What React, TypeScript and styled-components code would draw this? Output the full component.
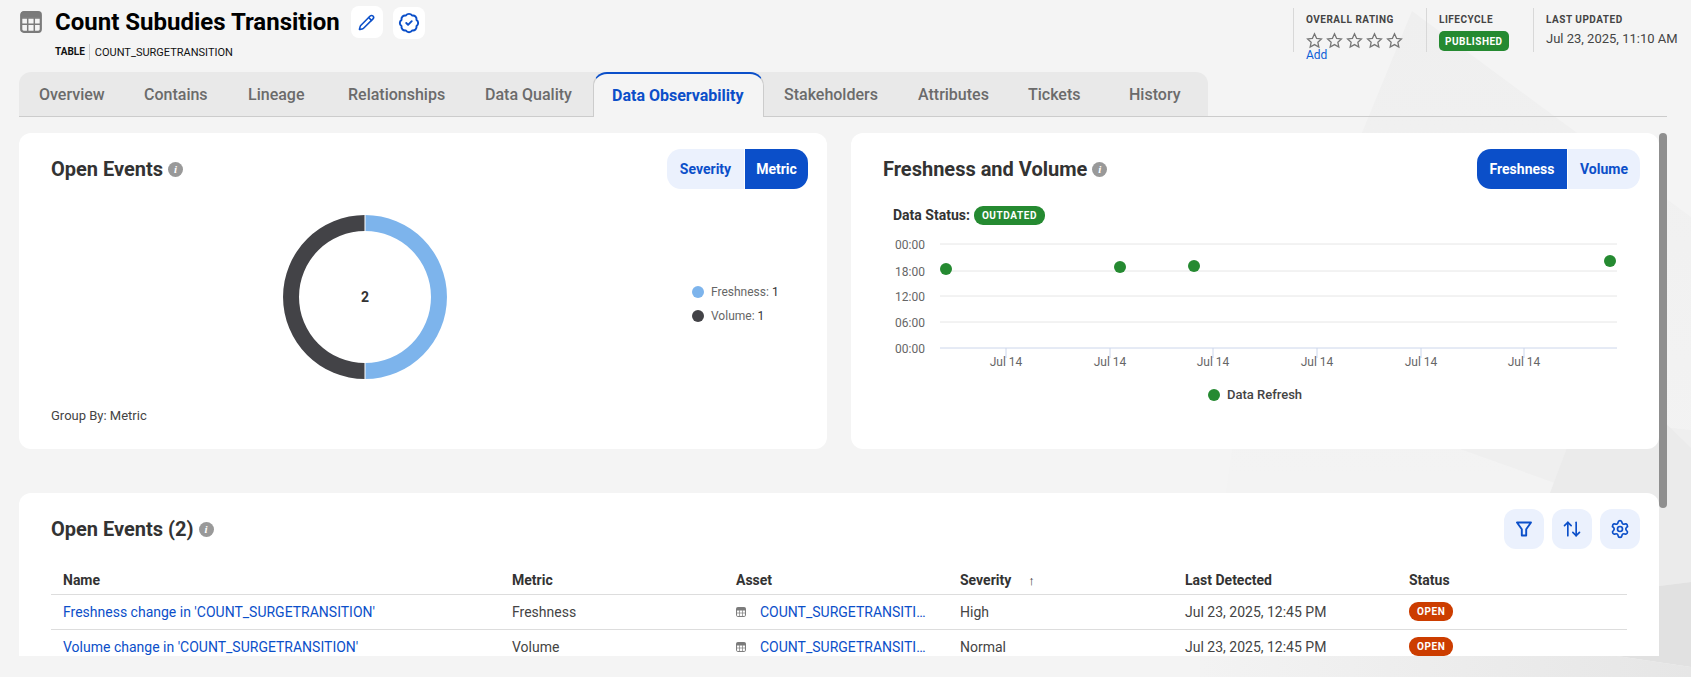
import styled, { createGlobalStyle } from "styled-components";
import { ArrowUpDown, BadgeCheck, Pencil, Settings } from "lucide-react";

const Global = createGlobalStyle`
	html, body {
		margin: 0;
		padding: 0;
		height: 100%;
		background: #f4f4f4;
		font-family: Roboto, "Liberation Sans", sans-serif;
		color: #333;
	}
	* { box-sizing: border-box; }
`;

const Page = styled.div`
	position: relative;
	width: 1691px;
	height: 677px;
	overflow: hidden;
	background: #f4f4f4;
`;

const Backdrop = styled.svg`
	position: absolute;
	inset: 0;
	z-index: 0;
`;

const Content = styled.div`
	position: relative;
	z-index: 1;
	display: flex;
	flex-direction: column;
	height: 656px;
`;

const Header = styled.header`
	display: flex;
	justify-content: space-between;
	height: 72px;
	padding: 6px 24px 0 20px;
`;

const TitleBlock = styled.div`
	display: flex;
	flex-direction: column;
`;

const TitleRow = styled.div`
	display: flex;
	align-items: center;
	height: 32px;
`;

const TableGlyph = styled.svg<{ $size: number; $gap?: number }>`
	flex: none;
	width: ${(p) => p.$size}px;
	height: ${(p) => p.$size}px;
	margin-right: ${(p) => p.$gap ?? 0}px;
	color: #7b7b7b;
`;

const Title = styled.h1`
	margin: 0 11px 0 0;
	font-size: 24px;
	line-height: 32px;
	font-weight: 700;
	color: #000;
`;

const WhiteButton = styled.button<{ $drop?: boolean }>`
	display: flex;
	align-items: center;
	justify-content: center;
	width: 32px;
	height: 32px;
	margin: ${(p) => (p.$drop ? "2px" : "0")} 10px 0 0;
	padding: 0;
	border: 0;
	border-radius: 8px;
	background: #fff;
	color: #0b4fc9;
`;

const SubRow = styled.div`
	display: flex;
	align-items: center;
	height: 16px;
	margin: 6px 0 0 35px;
	font-size: 11px;
	color: #111;
`;

const SubType = styled.span`
	font-size: 10px;
	font-weight: 700;
	padding-right: 4px;
	border-right: 1px solid #ccc;
	margin-right: 5px;
	line-height: 16px;
`;

const Meta = styled.div`
	display: flex;
	height: 44px;
	margin-top: 2px;
`;

const MetaCell = styled.div<{ $width: number }>`
	width: ${(p) => p.$width}px;
	height: 44px;
	padding-left: 12px;
	border-left: 1px solid #d8d8d8;
`;

const MetaLabel = styled.div`
	font-size: 10px;
	font-weight: 700;
	letter-spacing: 0.5px;
	line-height: 14px;
	margin-top: 5px;
	color: #444;
`;

const Stars = styled.div`
	display: flex;
	gap: 3px;
	margin-top: 5px;
	height: 16px;
`;

const StarGlyph = styled.svg`
	width: 17px;
	height: 17px;
	fill: none;
	stroke: #777;
	stroke-width: 1.8;
	stroke-linejoin: miter;
`;

const AddLink = styled.a`
	display: block;
	font-size: 12px;
	line-height: 14px;
	color: #0b5ed7;
`;

const Published = styled.span`
	display: inline-flex;
	align-items: center;
	height: 20px;
	margin-top: 4px;
	padding: 0 6px;
	border-radius: 5px;
	background: #258a31;
	color: #fff;
	font-size: 10px;
	font-weight: 700;
	letter-spacing: 0.5px;
`;

const MetaValue = styled.div`
	font-size: 13px;
	line-height: 16px;
	margin-top: 4px;
	color: #444;
	white-space: nowrap;
`;

const TabBar = styled.nav`
	display: flex;
	height: 45px;
	margin: 0 24px 0 19px;
	border-bottom: 1px solid #ccc;
`;

const TabTrack = styled.div`
	display: flex;
	width: 1189px;
	height: 44px;
	background: #e9e9e9;
	border-radius: 12px 12px 0 0;
`;

const Tab = styled.a<{ $width: number }>`
	display: flex;
	align-items: center;
	width: ${(p) => p.$width}px;
	padding-left: 20px;
	font-size: 16px;
	font-weight: 500;
	color: #6b6b6b;
`;

const ActiveTab = styled(Tab)`
	height: 45px;
	padding-left: 18px;
	font-weight: 700;
	color: #0b4fc9;
	background: #f4f4f4;
	border: 1px solid #ccc;
	border-top: 2px solid #0b4fc9;
	border-bottom: 0;
	border-radius: 14px 14px 0 0;
`;

const Scroller = styled.div`
	position: relative;
	flex: 1;
	overflow: hidden;
	margin-right: 24px;
	padding: 16px 8px 0 19px;
`;

const ScrollThumb = styled.div`
	position: absolute;
	top: 16px;
	right: 0;
	width: 8px;
	height: 375px;
	border-radius: 4px;
	background: #8f8f8f;
`;

const CardRow = styled.div`
	display: flex;
	gap: 24px;
	margin-bottom: 44px;
`;

const Card = styled.section<{ $height: number }>`
	flex: 1 1 0;
	min-width: 0;
	height: ${(p) => p.$height}px;
	padding: 16px 19px 0 32px;
	background: #fff;
	border-radius: 12px;
`;

const CardHead = styled.div`
	display: flex;
	align-items: center;
	justify-content: space-between;
	height: 40px;
`;

const CardTitle = styled.h2`
	display: flex;
	align-items: center;
	gap: 5px;
	margin: 0;
	font-size: 20px;
	font-weight: 700;
	color: #333;
`;

const InfoDot = styled.span`
	display: inline-flex;
	align-items: center;
	justify-content: center;
	width: 15px;
	height: 15px;
	border-radius: 50%;
	background: #999;
	color: #fff;
	font: italic 700 11px "Liberation Serif", serif;
`;

const Segments = styled.div`
	display: flex;
	gap: 1px;
	height: 40px;
	border-radius: 14px;
	overflow: hidden;
`;

const Segment = styled.button<{ $active?: boolean; $width: number }>`
	width: ${(p) => p.$width}px;
	padding: 0;
	border: 0;
	font: 700 14px Roboto, sans-serif;
	color: ${(p) => (p.$active ? "#fff" : "#0b4fc9")};
	background: ${(p) => (p.$active ? "#0b4fc9" : "#ebf1fd")};
`;

const DonutArea = styled.div`
	display: flex;
	align-items: flex-start;
	gap: 245px;
	height: 164px;
	margin-top: 26px;
	padding-left: 232px;
`;

const DonutBox = styled.div`
	position: relative;
	width: 164px;
	height: 164px;
`;

const DonutValue = styled.div`
	position: absolute;
	inset: 0;
	display: flex;
	align-items: center;
	justify-content: center;
	font-size: 14px;
	font-weight: 700;
	color: #333;
`;

const Legend = styled.div`
	display: flex;
	flex-direction: column;
	gap: 8px;
	margin-top: 69px;
`;

const LegendRow = styled.div`
	display: flex;
	align-items: center;
	gap: 7px;
	height: 16px;
	font-size: 12px;
	color: #666;
	white-space: pre;
	b { font-weight: 400; color: #333; }
`;

const Dot = styled.span<{ $color: string }>`
	width: 12px;
	height: 12px;
	border-radius: 50%;
	background: ${(p) => p.$color};
`;

const GroupBy = styled.div`
	margin-top: 29px;
	font-size: 13px;
	line-height: 15px;
	color: #444;
`;

const StatusLine = styled.div`
	display: flex;
	align-items: center;
	gap: 4px;
	height: 20px;
	margin: 16px 0 0 10px;
	font-size: 14px;
	font-weight: 700;
	color: #333;
`;

const Pill = styled.span<{ $color: string }>`
	display: inline-flex;
	align-items: center;
	justify-content: center;
	height: 19px;
	padding: 0 8px;
	border-radius: 9px;
	background: ${(p) => p.$color};
	color: #fff;
	font-size: 10px;
	font-weight: 700;
	letter-spacing: 0.6px;
`;

const ChartSvg = styled.svg`
	display: block;
	margin: 9px 0 0 -32px;
`;

const AxisText = styled.text`
	font: 12px Roboto, sans-serif;
	fill: #666;
`;

const ChartLegend = styled.div`
	display: flex;
	justify-content: center;
	align-items: center;
	gap: 7px;
	margin-top: 3px;
	padding-right: 13px;
	font-size: 13px;
	font-weight: 500;
	color: #444;
`;

const IconButtons = styled.div`
	display: flex;
	gap: 8px;
`;

const IconButton = styled.button`
	display: flex;
	align-items: center;
	justify-content: center;
	width: 40px;
	height: 40px;
	padding: 0;
	border: 0;
	border-radius: 12px;
	background: #ebf1fd;
	color: #0b4fc9;
`;

const Table = styled.table`
	width: 1576px;
	margin-top: 14px;
	border-collapse: collapse;
	table-layout: fixed;
	font-size: 14px;
	th, td {
		height: 35px;
		padding: 0 0 0 12px;
		text-align: left;
		border-bottom: 1px solid #ddd;
		white-space: nowrap;
	}
	th { height: 31px; padding-top: 3px; font-weight: 700; color: #333; }
	td { color: #444; }
`;

const BlueLink = styled.a`
	color: #0b4fc9;
`;

const AssetCell = styled.span`
	display: flex;
	align-items: center;
	gap: 14px;
`;

const Clip = styled(BlueLink)`
	display: block;
	width: 166px;
	overflow: hidden;
	text-overflow: ellipsis;
`;

const SortArrow = styled.span`
	margin-left: 17px;
	font-weight: 700;
	font-size: 13px;
`;

const rows = [
	{ name: "Freshness change in 'COUNT_SURGETRANSITION'", metric: "Freshness", severity: "High" },
	{ name: "Volume change in 'COUNT_SURGETRANSITION'", metric: "Volume", severity: "Normal" },
];

const tabs: [string, number][] = [
	["Overview", 105],
	["Contains", 104],
	["Lineage", 100],
	["Relationships", 137],
	["Data Quality", 128],
	["Data Observability", 171],
	["Stakeholders", 134],
	["Attributes", 110],
	["Tickets", 101],
	["History", 99],
];

const yTicks: [string, number][] = [
	["00:00", 10],
	["18:00", 37],
	["12:00", 62],
	["06:00", 88],
	["00:00", 114],
];

const xTicks = [1006, 1110, 1213, 1317, 1421, 1524];
const points: [number, number][] = [
	[946, 35],
	[1120, 33],
	[1194, 32],
	[1610, 27],
];

function TableIcon({ size, gap }: { size: number; gap?: number }) {
	return (
		<TableGlyph $size={size} $gap={gap} viewBox="0 0 22 22">
			<rect x="1.2" y="1.2" width="19.6" height="19.6" rx="2.5" fill="none" stroke="currentColor" strokeWidth="2.2" />
			<rect x="1.2" y="1.2" width="19.6" height="5.6" fill="currentColor" />
			<path d="M1 13.2h20M1 7h20M7.7 7v14M14.3 7v14" stroke="currentColor" strokeWidth="1.5" fill="none" />
		</TableGlyph>
	);
}

function FunnelIcon() {
	return (
		<svg width="18" height="18" viewBox="0 0 18 18" fill="none" stroke="currentColor" strokeWidth="1.9" strokeLinejoin="round">
			<path d="M2 2.5h14l-4.8 6.7v6.3H6.8V9.2z" />
		</svg>
	);
}

export default function App() {
	return (
		<Page>
			<Global />
			<Backdrop width="1691" height="677" viewBox="0 0 1691 677">
				<defs>
					<linearGradient id="fade" x1="0" y1="0" x2="0" y2="1">
						<stop offset="0" stopColor="#efefef" />
						<stop offset="0.7" stopColor="#f3f3f3" />
					</linearGradient>
					<linearGradient id="floor" x1="0" y1="0" x2="1" y2="0">
						<stop offset="0" stopColor="#f3f3f3" />
						<stop offset="1" stopColor="#e6e6e6" />
					</linearGradient>
				</defs>
				<polygon points="1412,11 1691,217 1691,677 1200,677 1232,449" fill="url(#fade)" />
				<polygon points="1400,400 1691,430 1691,532 1583,493 1460,449" fill="#efefef" />
				<polygon points="1600,360 1691,448 1691,582 1659,586 1550,493" fill="#ebebeb" />
				<polygon points="1500,600 1659,586 1691,582 1691,667 1617,656" fill="#e1e1e1" />
				<polygon points="1200,656 1617,656 1691,667 1691,677 1200,677" fill="url(#floor)" />
			</Backdrop>
			<Content>
				<Header>
					<TitleBlock>
						<TitleRow>
							<TableIcon size={22} gap={13} />
							<Title>Count Subudies Transition</Title>
							<WhiteButton>
								<Pencil size={17} strokeWidth={2.2} />
							</WhiteButton>
							<WhiteButton $drop>
								<BadgeCheck size={22} strokeWidth={2.1} />
							</WhiteButton>
						</TitleRow>
						<SubRow>
							<SubType>TABLE</SubType>
							COUNT_SURGETRANSITION
						</SubRow>
					</TitleBlock>
					<Meta>
						<MetaCell $width={133}>
							<MetaLabel>OVERALL RATING</MetaLabel>
							<Stars>
								{[0, 1, 2, 3, 4].map((i) => (
									<StarGlyph key={i} viewBox="0 0 24 24">
										<polygon points="12,2.5 14.9,8.9 21.8,9.7 16.7,14.4 18.1,21.3 12,17.8 5.9,21.3 7.3,14.4 2.2,9.7 9.1,8.9" />
									</StarGlyph>
								))}
							</Stars>
							<AddLink>Add</AddLink>
						</MetaCell>
						<MetaCell $width={107}>
							<MetaLabel>LIFECYCLE</MetaLabel>
							<Published>PUBLISHED</Published>
						</MetaCell>
						<MetaCell $width={134}>
							<MetaLabel>LAST UPDATED</MetaLabel>
							<MetaValue>Jul 23, 2025, 11:10 AM</MetaValue>
						</MetaCell>
					</Meta>
				</Header>
				<TabBar>
					<TabTrack>
						{tabs.map(([t, w]) =>
							t === "Data Observability" ? (
								<ActiveTab key={t} $width={w}>
									{t}
								</ActiveTab>
							) : (
								<Tab key={t} $width={w}>
									{t}
								</Tab>
							),
						)}
					</TabTrack>
				</TabBar>
				<Scroller>
					<ScrollThumb />
					<CardRow>
						<Card $height={316}>
							<CardHead>
								<CardTitle>
									Open Events <InfoDot>i</InfoDot>
								</CardTitle>
								<Segments>
									<Segment $width={77}>Severity</Segment>
									<Segment $width={63} $active>
										Metric
									</Segment>
								</Segments>
							</CardHead>
							<DonutArea>
								<DonutBox>
									<svg width="164" height="164" viewBox="0 0 164 164">
										<path d="M82 0a82 82 0 0 1 0 164v-16a66 66 0 0 0 0-132z" fill="#7db4ec" />
										<path d="M82 0a82 82 0 0 0 0 164v-16a66 66 0 0 1 0-132z" fill="#434347" />
										<rect x="81.5" width="1" height="164" fill="#fff" />
									</svg>
									<DonutValue>2</DonutValue>
								</DonutBox>
								<Legend>
									<LegendRow>
										<Dot $color="#7db4ec" />
										<span>
											Freshness: <b>1</b>
										</span>
									</LegendRow>
									<LegendRow>
										<Dot $color="#434347" />
										<span>
											Volume: <b>1</b>
										</span>
									</LegendRow>
								</Legend>
							</DonutArea>
							<GroupBy>Group By: Metric</GroupBy>
						</Card>
						<Card $height={316}>
							<CardHead>
								<CardTitle>
									Freshness and Volume <InfoDot>i</InfoDot>
								</CardTitle>
								<Segments>
									<Segment $width={90} $active>
										Freshness
									</Segment>
									<Segment $width={72}>Volume</Segment>
								</Segments>
							</CardHead>
							<StatusLine>
								Data Status: <Pill $color="#258a31">OUTDATED</Pill>
							</StatusLine>
							<ChartSvg width="808" height="150" viewBox="851 0 808 150">
								{yTicks.map(([label, y], i) => (
									<g key={i}>
										<line
											x1="940"
											x2="1617"
											y1={y}
											y2={y}
											stroke={i === 4 ? "#ccd6eb" : "#e6e6e6"}
										/>
										<AxisText x="925" y={y + 5} textAnchor="end">
											{label}
										</AxisText>
									</g>
								))}
								{xTicks.map((x) => (
									<g key={x}>
										<line x1={x} x2={x} y1="114" y2="124" stroke="#ccd6eb" />
										<AxisText x={x} y="132" textAnchor="middle">
											Jul 14
										</AxisText>
									</g>
								))}
								{points.map(([x, y]) => (
									<circle key={x} cx={x} cy={y} r="6" fill="#258a31" />
								))}
							</ChartSvg>
							<ChartLegend>
								<Dot $color="#258a31" />
								Data Refresh
							</ChartLegend>
						</Card>
					</CardRow>
					<Card $height={200}>
						<CardHead>
							<CardTitle>
								Open Events (2) <InfoDot>i</InfoDot>
							</CardTitle>
							<IconButtons>
								<IconButton>
									<FunnelIcon />
								</IconButton>
								<IconButton>
									<ArrowUpDown size={20} />
								</IconButton>
								<IconButton>
									<Settings size={20} />
								</IconButton>
							</IconButtons>
						</CardHead>
						<Table>
							<colgroup>
								<col style={{ width: 449 }} />
								<col style={{ width: 224 }} />
								<col style={{ width: 224 }} />
								<col style={{ width: 225 }} />
								<col style={{ width: 224 }} />
								<col />
							</colgroup>
							<thead>
								<tr>
									<th>Name</th>
									<th>Metric</th>
									<th>Asset</th>
									<th>
										Severity<SortArrow>↑</SortArrow>
									</th>
									<th>Last Detected</th>
									<th>Status</th>
								</tr>
							</thead>
							<tbody>
								{rows.map((r) => (
									<tr key={r.metric}>
										<td>
											<BlueLink>{r.name}</BlueLink>
										</td>
										<td>{r.metric}</td>
										<td>
											<AssetCell>
												<TableIcon size={10} />
												<Clip>COUNT_SURGETRANSITION</Clip>
											</AssetCell>
										</td>
										<td>{r.severity}</td>
										<td>Jul 23, 2025, 12:45 PM</td>
										<td>
											<Pill $color="#cc3d00">OPEN</Pill>
										</td>
									</tr>
								))}
							</tbody>
						</Table>
					</Card>
				</Scroller>
			</Content>
		</Page>
	);
}
